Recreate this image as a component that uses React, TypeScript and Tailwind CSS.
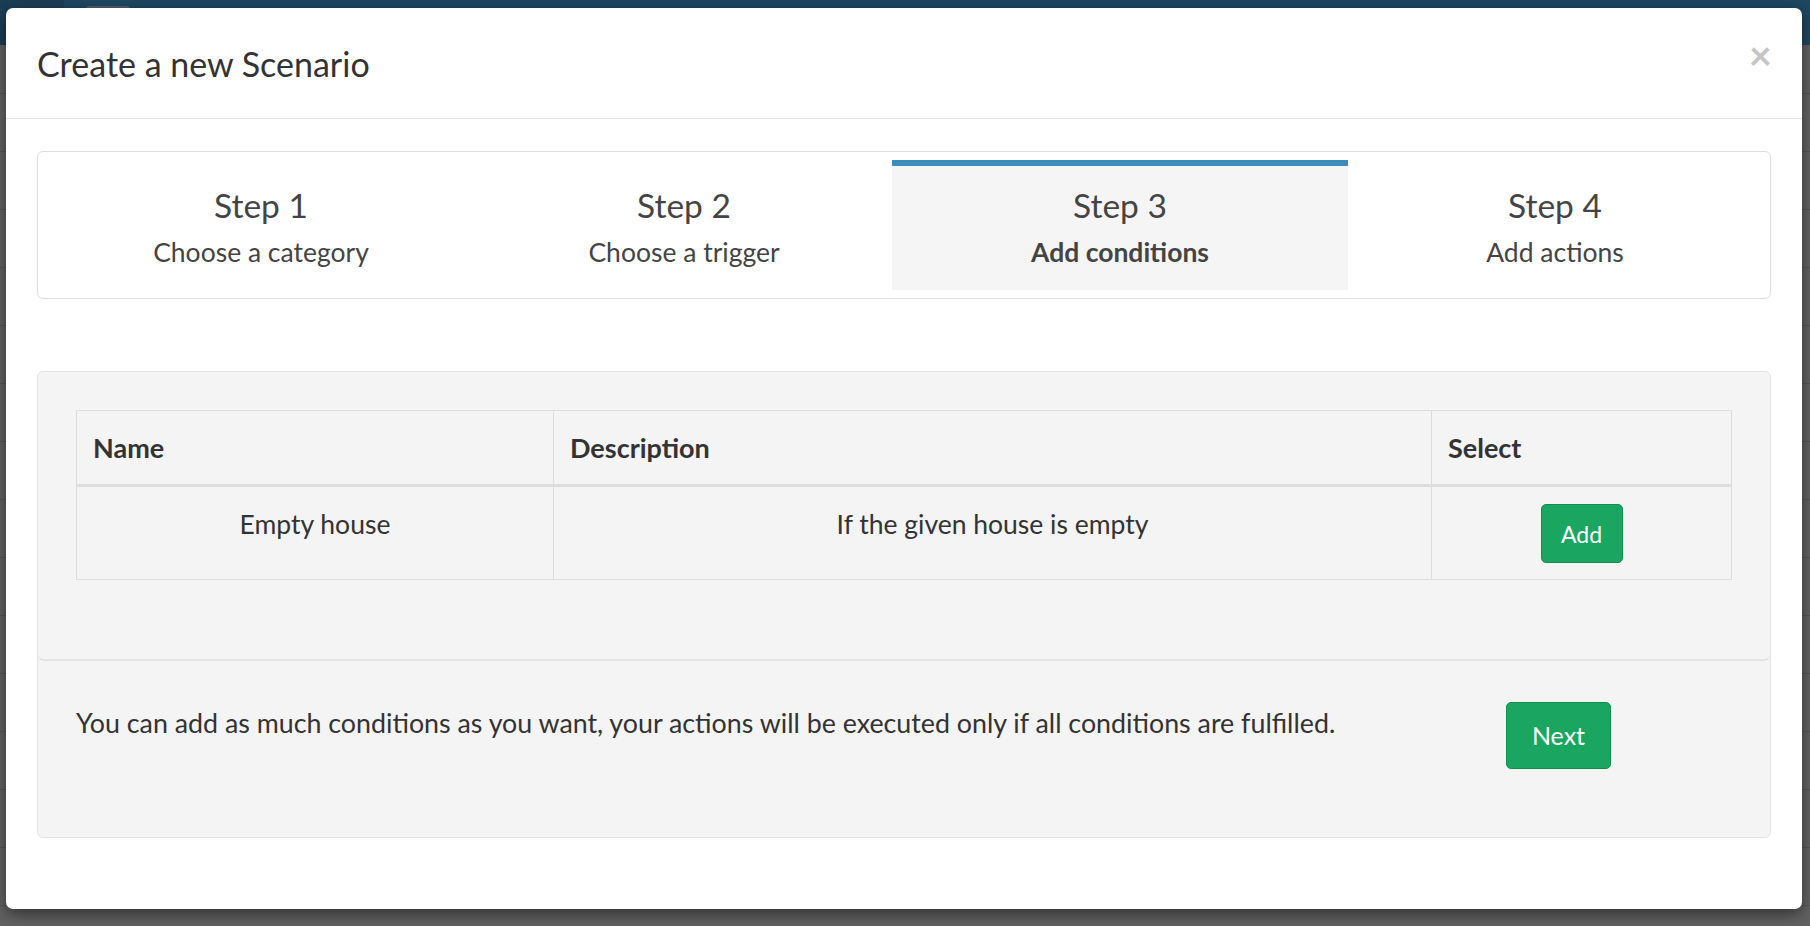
import React from "react";

const font = "font-['Lato','Liberation_Sans',sans-serif]";

const steps = [
  { title: "Step 1", sub: "Choose a category", w: "w-[430px]" },
  { title: "Step 2", sub: "Choose a trigger", w: "w-[416px]" },
  { title: "Step 3", sub: "Add conditions", w: "w-[456px]", active: true },
  { title: "Step 4", sub: "Add actions", w: "flex-1" },
];

function Backdrop() {
  return (
    <div className="flex flex-col h-full">
      {/* navbar */}
      <div className="h-[45px] flex bg-[#1f4761]">
        <div className="w-[64px] bg-[#1b3e55]" />
        <div className="ml-[22px] mt-[6px] w-[44px] h-[32px] rounded-t bg-[#4e5f6b]" />
      </div>
      <div className="h-[49px] border-b border-[#555555]" />
      {Array.from({ length: 14 }).map((_, i) => (
        <div key={i} className="h-[58px] border-b border-[#565656]" />
      ))}
    </div>
  );
}

function Steps() {
  return (
    <div className="mt-[32px] h-[148px] border border-[#dddddd] rounded-[6px] bg-white flex px-[8px] py-[8px]">
      {steps.map((s) => (
        <div
          key={s.title}
          className={
            s.w +
            " flex flex-col items-center justify-center gap-[12px] pb-[3px] text-[#444444] border-t-[6px] " +
            (s.active ? "bg-[#f5f5f5] border-[#3c8dbc]" : "border-transparent")
          }
        >
          <div className="text-[33.5px] leading-[38px]">{s.title}</div>
          <div className={"text-[26.5px] leading-[32px] " + (s.active ? "font-bold" : "")}>{s.sub}</div>
        </div>
      ))}
    </div>
  );
}

function ConditionsTable() {
  return (
    <table className="w-full border-collapse border border-[#dddddd] text-[26.5px] leading-[32px] text-[#333333]">
      <thead>
        <tr className="h-[75px]">
          <th className="w-[477px] border border-[#dddddd] border-b-[3px] text-left font-bold text-[27px] px-[16px]">Name</th>
          <th className="w-[878px] border border-[#dddddd] border-b-[3px] text-left font-bold text-[27px] px-[16px]">Description</th>
          <th className="border border-[#dddddd] border-b-[3px] text-left font-bold text-[27px] px-[16px]">Select</th>
        </tr>
      </thead>
      <tbody>
        <tr className="h-[94px]">
          <td className="border border-[#dddddd] text-center align-top pt-[21px]">Empty house</td>
          <td className="border border-[#dddddd] text-center align-top pt-[21px]">If the given house is empty</td>
          <td className="border border-[#dddddd] text-center align-top pt-[17px]">
            <button className="w-[82px] h-[59px] rounded-[5px] bg-[#1aa660] border border-[#138d50] text-white text-[23px]">
              Add
            </button>
          </td>
        </tr>
      </tbody>
    </table>
  );
}

export default function App() {
  return (
    <div className={"relative w-full h-[926px] overflow-hidden bg-[#626262] " + font}>
      <Backdrop />

      {/* modal */}
      <div className="absolute left-[6px] top-[8px] w-[1796px] h-[901px] bg-white rounded-[7px] shadow-[0_5px_15px_rgba(0,0,0,0.5)] flex flex-col">
        <div className="h-[111px] shrink-0 border-b border-[#e5e5e5] flex items-center justify-between pl-[31px] pr-[30px]">
          <h4 className="text-[34px] text-[#333333]">Create a new Scenario</h4>
          <span className="relative -top-[8px] text-[40px] font-bold text-[#c6c6c6] leading-none">×</span>
        </div>

        <div className="px-[31px]">
          <Steps />

          <div className="mt-[72px] h-[467px] border border-[#e3e3e3] rounded-[6px] bg-[#f4f4f4] flex flex-col">
            <div className="h-[289px] shrink-0 border-b-[2px] border-[#e3e3e3] rounded-b-[6px] px-[38px] pt-[38px]">
              <ConditionsTable />
            </div>
            <div className="flex items-start pl-[38px] pt-[41px]">
              <p className="w-[1430px] pt-[5px] text-[26.8px] text-[#333333] leading-[32px]">
                You can add as much conditions as you want, your actions will be executed only if all conditions are fulfilled.
              </p>
              <button className="w-[105px] h-[67px] rounded-[5px] bg-[#1aa660] border border-[#138d50] text-white text-[25px]">
                Next
              </button>
            </div>
          </div>
        </div>
      </div>
    </div>
  );
}
